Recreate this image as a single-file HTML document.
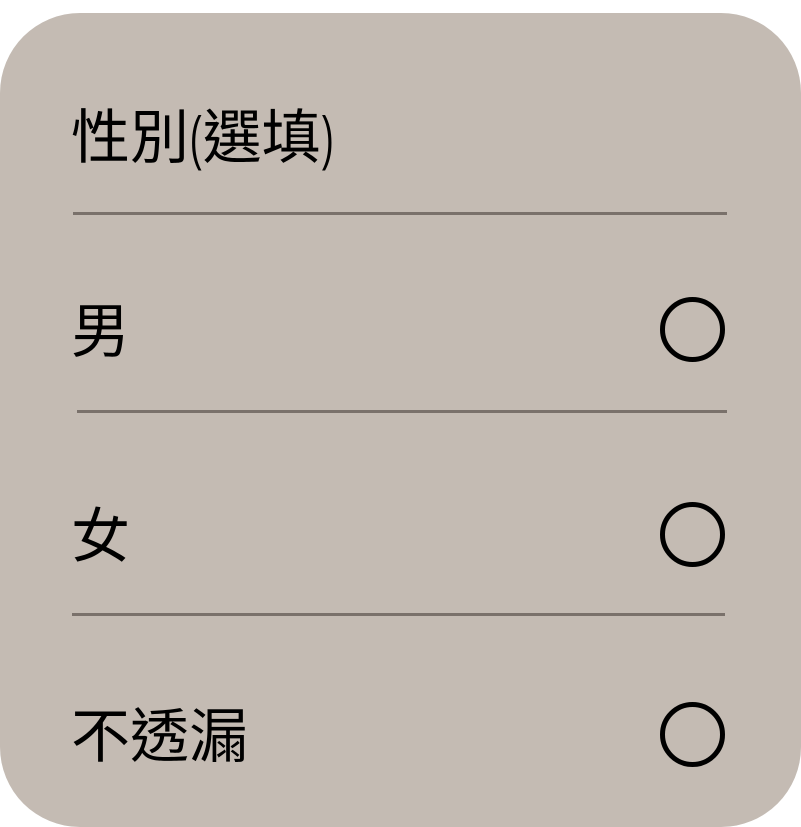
<!DOCTYPE html>
<html><head><meta charset="utf-8"><style>
html,body{margin:0;padding:0;background:#fff;width:801px;height:822px;overflow:hidden}
.card{position:absolute;left:0;top:13px;width:801px;height:814px;background:#c4bbb3;border-radius:80px}
.t{position:absolute;left:71px;font-family:"Liberation Sans","Noto Sans CJK TC",sans-serif;font-size:59px;line-height:59px;height:59px;color:#000;white-space:nowrap}
.l{position:absolute;height:3px;background:#7a716b}
.c{position:absolute;left:660px;width:55px;height:55px;border:5px solid #000;border-radius:50%}
.p{display:inline-block;transform:scaleX(0.6);margin:0 -3px}
</style></head><body>
<div class="card"></div>
<div class="t" style="top:109px">性別<span class="p">(</span>選填<span class="p">)</span></div>
<div class="l" style="left:73px;top:212px;width:654px"></div>
<div class="t" style="top:303px">男</div>
<div class="c" style="top:297px"></div>
<div class="l" style="left:77px;top:410px;width:650px"></div>
<div class="t" style="top:508px">女</div>
<div class="c" style="top:502px"></div>
<div class="l" style="left:72px;top:613px;width:653px"></div>
<div class="t" style="top:708px">不透漏</div>
<div class="c" style="top:702px"></div>
</body></html>
